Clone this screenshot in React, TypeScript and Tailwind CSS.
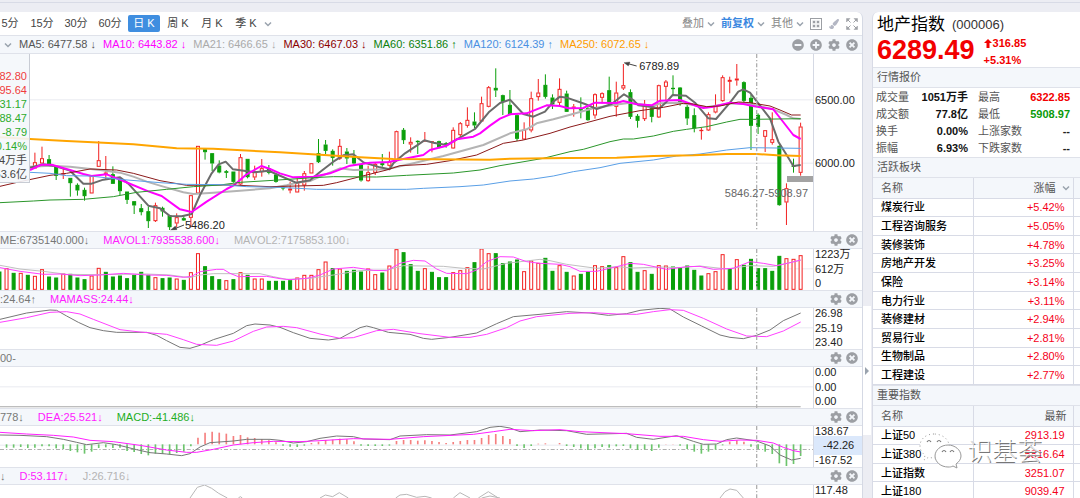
import React, { useState } from "react";
import {
  FaCog,
  FaMinusCircle,
  FaPaintBrush,
  FaPlusCircle,
  FaTimesCircle,
} from "react-icons/fa";

type Candle = [dir: number, high: number, low: number, open: number, close: number];

// chart space: three units per pixel
const CHART_W = 2439;
const FIRST_X = 104.7;
const STEP = 21.27;

const xAt = (i: number) => FIRST_X + STEP * i;

const candles: Candle[] = [
  [1, 458, 505, 487, 505], [1, 440, 490, 475, 490], [0, 465, 492, 478, 492],
  [0, 500, 540, 500, 527], [1, 505, 537, 520, 523], [0, 534, 590, 534, 549],
  [0, 550, 587, 555, 571], [0, 563, 602, 570, 588], [1, 527, 580, 527, 580],
  [1, 423, 500, 481, 500], [1, 468, 537, 518, 521], [0, 499, 551, 523, 551],
  [0, 535, 585, 535, 573], [0, 575, 612, 575, 599], [0, 604, 642, 604, 616],
  [0, 612, 646, 625, 636], [0, 620, 684, 634, 663], [1, 608, 666, 616, 663],
  [0, 620, 650, 624, 634], [0, 646, 690, 646, 681], [1, 640, 682, 652, 670],
  [0, 645, 663, 655, 661], [1, 586, 682, 586, 653], [1, 438, 580, 438, 580],
  [0, 448, 479, 448, 456], [0, 460, 513, 460, 490], [0, 481, 520, 497, 517],
  [0, 510, 534, 514, 518], [0, 515, 548, 515, 545], [1, 462, 558, 472, 553],
  [0, 477, 535, 477, 531], [1, 497, 540, 515, 532], [1, 477, 530, 505, 516],
  [0, 495, 523, 505, 518], [0, 520, 548, 524, 545], [0, 556, 571, 562, 563],
  [1, 545, 580, 566, 571], [1, 535, 577, 548, 577], [1, 513, 572, 520, 556],
  [1, 490, 520, 490, 520], [0, 417, 489, 460, 486], [0, 420, 462, 434, 452],
  [0, 448, 497, 453, 473], [1, 417, 480, 438, 476], [0, 444, 492, 455, 475],
  [0, 450, 495, 472, 490], [0, 494, 545, 494, 541], [1, 497, 545, 517, 543],
  [1, 488, 525, 492, 518], [0, 462, 500, 490, 495], [1, 455, 500, 485, 497],
  [1, 392, 485, 394, 483], [0, 384, 432, 390, 420], [1, 412, 458, 426, 433],
  [0, 421, 462, 423, 424], [1, 396, 426, 421, 424], [1, 424, 457, 424, 425],
  [0, 422, 445, 424, 443], [0, 426, 443, 430, 434], [1, 382, 446, 390, 445],
  [1, 366, 413, 370, 405], [1, 322, 383, 360, 377], [0, 337, 385, 365, 376],
  [1, 290, 366, 310, 364], [1, 258, 322, 262, 320], [0, 205, 291, 264, 271],
  [0, 284, 345, 286, 305], [0, 270, 346, 315, 344], [0, 340, 423, 346, 416],
  [1, 367, 420, 390, 418], [1, 275, 397, 295, 391], [1, 237, 302, 278, 291],
  [0, 223, 296, 255, 290], [0, 283, 327, 293, 313], [1, 235, 320, 267, 308],
  [0, 272, 336, 281, 335], [1, 312, 350, 320, 323], [0, 292, 355, 328, 330],
  [0, 320, 362, 325, 360], [1, 280, 356, 283, 346], [1, 277, 310, 280, 293],
  [0, 230, 312, 271, 310], [1, 245, 350, 278, 320], [1, 192, 270, 256, 265],
  [0, 268, 357, 277, 350], [0, 342, 383, 348, 362], [1, 300, 363, 315, 357],
  [0, 322, 367, 325, 350], [1, 254, 354, 256, 352], [1, 240, 300, 245, 260],
  [0, 226, 288, 264, 266], [0, 261, 317, 263, 311], [0, 310, 375, 321, 355],
  [0, 325, 397, 346, 385], [1, 383, 419, 390, 392], [1, 337, 393, 343, 391],
  [1, 283, 340, 318, 337], [1, 226, 305, 232, 303], [1, 230, 280, 240, 245],
  [1, 192, 257, 236, 241], [0, 244, 307, 247, 302], [0, 285, 450, 294, 377],
  [0, 340, 402, 345, 380], [1, 391, 456, 391, 410], [1, 337, 434, 418, 428],
  [0, 436, 617, 438, 615], [1, 550, 675, 565, 607], [0, 476, 518, 497, 500],
  [1, 368, 527, 380, 518],
];

// first entry sits five steps left of the first candle
const volumeTops = [
  140, 130, 144, 144, 150, 153, 133, 155, 158, 146, 147, 158, 163, 152, 129,
  141, 155, 152, 160, 150, 141, 150, 157, 160, 158, 161, 165, 142, 85, 124,
  154, 163, 166, 163, 142, 150, 161, 161, 168, 168, 168, 166, 158, 150, 150,
  133, 110, 130, 131, 138, 135, 140, 131, 148, 143, 122, 73, 82, 118, 138,
  130, 141, 157, 157, 142, 136, 127, 112, 71, 85, 85, 115, 110, 104, 139, 107,
  114, 99, 138, 121, 141, 152, 147, 140, 121, 124, 121, 127, 94, 112, 141,
  136, 147, 121, 122, 125, 128, 122, 135, 152, 145, 139, 88, 130, 103, 120,
  102, 130, 130, 138, 93, 100, 102, 91,
];

const redVolumes = new Set([
  -4, -2, 0, 1, 4, 8, 9, 17, 20, 22, 23, 27, 29, 31, 32, 37, 38, 39, 40, 41,
  43, 47, 48, 50, 51, 55, 59, 60, 61, 63, 64, 69, 70, 71, 74, 76, 79, 80, 82,
  83, 86, 88, 89, 95, 96, 97, 99, 106, 107, 108,
]);

// first entry sits four steps left of the first candle
const macdBars = [
  308, 308, 306, 309, 308, 304, 304, 310, 312, 318, 322, 326, 320, 309, 307,
  309, 308, 318, 321, 327, 331, 326, 327, 328, 324, 320, 304, 278, 263, 260,
  263, 266, 273, 270, 277, 279, 282, 286, 292, 302, 305, 306, 302, 294, 290,
  285, 284, 281, 283, 289, 302, 303, 303, 303, 302, 288, 285, 285, 287, 286,
  288, 291, 294, 291, 288, 285, 285, 279, 270, 267, 273, 282, 303, 309, 303,
  296, 295, 298, 294, 303, 306, 310, 315, 310, 306, 308, 304, 303, 310, 315,
  313, 318, 308, 297, 297, 302, 312, 320, 326, 320, 314, 301, 290, 286, 290,
  305, 312, 320, 327, 355, 363, 357, 333,
];

const mainLines = [
  {
    color: "#b4b4b4",
    width: 2,
    points:
      "90,500 150,497 210,500 300,510 360,518 400,530 440,545 490,560 550,577 580,582 640,578 720,572 810,565 860,556 890,548 930,543 960,530 1020,505 1060,510 1160,508 1240,490 1330,468 1450,435 1530,400 1580,388 1610,370 1660,358 1705,346 1780,325 1840,315 1890,308 1960,318 1980,310 2040,308 2120,322 2190,310 2250,312 2320,328 2360,345 2380,355 2402,357",
  },
  {
    color: "#6b6b6b",
    width: 2,
    points:
      "90,503 130,493 160,497 210,512 250,551 275,551 310,539 360,532 385,551 445,617 480,625 510,648 545,649 575,642 600,585 635,520 656,493 677,485 699,508 721,511 764,517 806,512 828,522 888,548 930,541 960,516 1000,485 1030,466 1060,463 1090,487 1140,502 1168,508 1180,490 1215,460 1250,437 1273,421 1300,428 1340,435 1380,413 1425,387 1468,335 1500,309 1530,299 1570,342 1600,350 1635,335 1660,305 1680,290 1700,293 1755,312 1790,327 1835,312 1872,283 1900,300 1915,316 1960,322 1977,326 2000,305 2018,285 2058,287 2085,308 2125,355 2148,357 2190,308 2215,275 2230,268 2250,278 2275,310 2310,355 2335,425 2360,465 2380,498 2402,495",
  },
  {
    color: "#ff00ff",
    width: 2,
    points:
      "90,510 125,494 155,494 210,510 250,522 275,528 320,523 370,543 445,574 485,588 540,628 575,636 620,605 680,567 700,557 740,523 784,498 810,507 840,520 880,532 940,530 990,520 1050,497 1110,488 1165,486 1225,474 1270,465 1290,450 1340,437 1370,418 1420,410 1440,400 1470,377 1500,356 1530,343 1580,340 1640,316 1680,318 1705,325 1750,324 1785,308 1850,309 1870,303 1910,313 1955,316 1980,302 2040,300 2090,318 2110,324 2140,320 2190,308 2230,312 2270,320 2320,328 2345,360 2380,405 2402,417",
  },
  {
    color: "#8b1a1a",
    width: 1,
    points:
      "0,559 60,545 150,526 200,520 270,507 350,510 400,520 480,542 560,556 690,555 810,560 890,558 970,556 1010,548 1080,530 1160,510 1200,497 1280,493 1350,482 1430,465 1510,430 1570,420 1650,400 1710,381 1760,368 1830,349 1920,332 1990,322 2050,310 2080,312 2120,320 2160,318 2215,306 2250,308 2310,318 2340,330 2375,345 2402,345",
  },
  {
    color: "#2b962b",
    width: 1,
    points:
      "0,608 100,603 150,600 250,598 340,590 410,577 500,568 580,560 660,555 720,547 820,541 940,533 1000,530 1130,531 1220,526 1360,519 1440,510 1500,497 1560,487 1630,475 1710,455 1750,448 1830,425 1870,417 1900,417 1960,408 2020,394 2060,388 2120,380 2180,366 2220,358 2260,358 2402,356",
  },
  {
    color: "#5a9fe6",
    width: 1,
    points:
      "90,517 150,520 200,527 270,528 370,539 480,548 560,553 660,554 740,560 840,562 950,568 1220,568 1270,565 1380,560 1450,555 1530,543 1600,537 1660,528 1720,515 1800,503 1860,490 1960,480 2030,468 2100,462 2180,450 2250,443 2402,445",
  },
  {
    color: "#ffa500",
    width: 2,
    points:
      "0,412 90,417 200,423 310,428 400,433 530,445 640,446 840,457 960,464 1080,472 1180,477 1300,478 1470,479 1530,476 1700,474 1850,473 1960,468 2080,466 2180,462 2270,462 2330,466 2402,468",
  },
];

const volumeLines = [
  {
    color: "#c0c0c0",
    width: 1,
    points:
      "0,121 60,132 130,139 200,148 290,149 440,147 510,150 570,158 600,150 640,146 780,146 820,155 860,163 930,160 1000,150 1080,137 1160,135 1210,122 1330,124 1390,130 1450,132 1520,115 1620,103 1650,107 1700,118 1790,130 1850,125 1900,129 1980,126 2040,128 2100,123 2180,132 2250,122 2320,124 2402,106",
  },
  {
    color: "#ff40ff",
    width: 1,
    points:
      "0,128 60,139 130,148 180,147 240,152 300,150 370,145 440,150 500,151 550,157 575,154 600,140 650,133 670,133 690,145 715,155 800,154 840,161 870,164 920,160 960,150 1000,132 1060,127 1120,136 1160,137 1200,115 1240,106 1275,108 1310,132 1340,145 1400,146 1430,135 1460,110 1500,95 1540,96 1580,110 1620,115 1680,118 1710,125 1740,139 1790,139 1850,125 1890,115 1930,118 2000,133 2060,125 2100,124 2140,133 2200,130 2250,110 2290,115 2330,122 2370,113 2402,105",
  },
];

const massLines = [
  {
    color: "#777777",
    width: 1,
    points:
      "0,283 80,264 150,255 170,256 200,273 235,292 270,308 310,317 350,322 440,322 470,331 500,347 540,367 570,370 600,361 640,344 700,325 740,302 765,297 810,300 840,307 880,323 930,340 985,345 1020,340 1080,308 1100,303 1120,308 1165,322 1230,328 1270,340 1295,343 1350,337 1430,324 1490,296 1540,275 1620,268 1700,260 1770,264 1825,271 1880,266 1920,256 1980,250 2010,252 2050,276 2105,303 2160,330 2190,337 2230,341 2270,331 2310,315 2350,287 2402,264",
  },
  {
    color: "#ff40ff",
    width: 1,
    points:
      "0,292 80,278 150,262 200,260 240,267 280,283 360,314 420,321 500,328 550,344 590,358 650,361 700,348 760,319 800,306 850,304 890,308 960,327 1020,340 1060,338 1130,317 1180,313 1260,326 1350,337 1410,337 1460,328 1520,308 1560,288 1610,275 1710,265 1780,263 1850,267 1910,268 1960,260 2010,254 2050,256 2110,280 2180,312 2240,333 2300,335 2350,318 2402,291",
  },
];

const macdLines = [
  {
    color: "#777777",
    width: 1,
    points:
      "0,270 60,271 140,275 190,283 230,292 260,299 310,293 350,299 410,314 450,323 500,327 545,332 570,326 600,306 630,293 700,288 740,283 810,283 840,286 880,294 920,290 960,280 1010,273 1060,275 1090,282 1170,284 1200,273 1280,269 1350,270 1430,260 1470,247 1500,244 1530,249 1560,260 1620,255 1700,257 1760,268 1880,265 1910,277 1960,283 2030,272 2080,289 2110,298 2150,297 2180,284 2210,279 2270,288 2310,303 2340,330 2375,345 2402,340",
  },
  {
    color: "#ff20ff",
    width: 1,
    points:
      "0,262 80,267 160,271 220,276 270,286 340,290 420,301 500,315 560,322 590,322 640,313 700,300 760,293 820,289 900,290 960,287 1060,281 1170,283 1270,275 1420,268 1480,260 1530,253 1600,257 1680,254 1740,260 1880,266 1980,274 2050,274 2110,284 2160,289 2220,285 2270,286 2320,294 2350,307 2380,317 2402,321",
  },
];

const kdjLines = [
  "570,459 592,427 614,420 635,430 656,445 682,459",
  "715,459 721,455 727,459",
  "960,459 976,450 998,455 1018,443 1045,459",
  "1187,459 1200,450 1220,448 1250,457 1275,454 1295,459",
  "1360,459 1380,443 1410,459",
  "1435,459 1465,440 1495,459",
  "1445,459 1470,453 1500,459",
  "2160,459 2175,440 2190,432 2210,436 2230,459",
].map((points) => ({ color: "#b8b8b8", width: 1, points }));

const averages = [
  { text: "MA5: 6477.58 ↓", cls: "text-[#555555]" },
  { text: "MA10: 6443.82 ↓", cls: "text-[#ff00ff]" },
  { text: "MA21: 6466.65 ↓", cls: "text-[#aaaaaa]" },
  { text: "MA30: 6467.03 ↓", cls: "text-[#8b0000]" },
  { text: "MA60: 6351.86 ↑", cls: "text-[#0c800c]" },
  { text: "MA120: 6124.39 ↑", cls: "text-[#4a90e2]" },
  { text: "MA250: 6072.65 ↓", cls: "text-[#ff9c00]" },
];

const hoverRows = [
  { text: "382.80", cls: "text-[#f03c3c]" },
  { text: "395.64", cls: "text-[#f03c3c]" },
  { text: "231.17", cls: "text-[#2cab2c]" },
  { text: "288.47", cls: "text-[#2cab2c]" },
  { text: "-8.79", cls: "text-[#2cab2c]" },
  { text: "0.14%", cls: "text-[#2cab2c]" },
  { text: "4万手", cls: "text-[#444444]" },
  { text: "53.6亿", cls: "text-[#444444]" },
];

const periods = ["5分", "15分", "30分", "60分", "日 K", "周 K", "月 K", "季 K"];

const quote = [
  ["成交量", "1051万手", "最高", "6322.85", "text-[#f20000]"],
  ["成交额", "77.8亿", "最低", "5908.97", "text-[#0a9a0a]"],
  ["换手", "0.00%", "上涨家数", "--", ""],
  ["振幅", "6.93%", "下跌家数", "--", ""],
];

const sectors = [
  ["煤炭行业", "+5.42%"],
  ["工程咨询服务", "+5.05%"],
  ["装修装饰", "+4.78%"],
  ["房地产开发", "+3.25%"],
  ["保险", "+3.14%"],
  ["电力行业", "+3.11%"],
  ["装修建材", "+2.94%"],
  ["贸易行业", "+2.81%"],
  ["生物制品", "+2.80%"],
  ["工程建设", "+2.77%"],
];

const indices = [
  ["上证50", "2913.19"],
  ["上证380", "5816.64"],
  ["上证指数", "3251.07"],
  ["上证180", "9039.47"],
];

type Line = { color: string; width: number; points: string };

const Lines: React.FC<{ lines: Line[] }> = ({ lines }) => (
  <>
    {lines.map((l) => (
      <polyline
        key={l.points}
        points={l.points}
        fill="none"
        stroke={l.color}
        strokeWidth={l.width}
        strokeLinejoin="round"
        vectorEffect="non-scaling-stroke"
      />
    ))}
  </>
);

const Plot: React.FC<{
  top: number;
  height: number;
  label: string;
  children?: React.ReactNode;
}> = ({ top, height, label, children }) => (
  <svg
    className="block h-full w-full"
    viewBox={`0 ${top} ${CHART_W} ${height}`}
    preserveAspectRatio="none"
    role="img"
    aria-label={label}
  >
    {children}
    <line
      x1={2270}
      x2={2270}
      y1={top}
      y2={top + height}
      stroke="#b0b0b0"
      strokeWidth={4}
      strokeDasharray="12 6 4 6"
    />
  </svg>
);

const GridLine: React.FC<{ y: number }> = ({ y }) => (
  <rect x={0} y={y} width={CHART_W} height={3} fill="#e9ebf1" />
);

const Chevron: React.FC = () => (
  <svg className="h-1.5 w-2 shrink-0" viewBox="0 0 8 6" aria-hidden="true">
    <path d="M1 1.5 4 4.5 7 1.5" fill="none" stroke="#9aa3ae" strokeWidth="1.5" />
  </svg>
);

const IconButton: React.FC<{ label: string; children: React.ReactNode }> = ({
  label,
  children,
}) => (
  <button
    type="button"
    aria-label={label}
    className="flex size-3 items-center justify-center text-xs text-[#9c9fa4]"
  >
    {children}
  </button>
);

const SubPanel: React.FC<{
  legend: { text: string; cls: string }[];
  axis: React.ReactNode;
  children: React.ReactNode;
}> = ({ legend, axis, children }) => (
  <section className="shrink-0">
    <div className="flex h-[18px] items-center justify-between border-y border-[#dfe2ea] bg-[#f4f7fb]">
      <div className="flex gap-[14px]">
        {legend.map((item) => (
          <span key={item.text} className={item.cls}>
            {item.text}
          </span>
        ))}
      </div>
      <div className="flex gap-1 pr-1">
        <IconButton label="设置">
          <FaCog />
        </IconButton>
        <IconButton label="关闭">
          <FaTimesCircle />
        </IconButton>
      </div>
    </div>
    <div className="flex h-[41px]">
      <div className="min-w-0 flex-1 border-r border-[#d5d9e4]">{children}</div>
      <div className="flex w-12 flex-col justify-between pb-0.5 leading-[10px]">
        {axis}
      </div>
    </div>
  </section>
);

const Axis: React.FC<{ values: string[] }> = ({ values }) => (
  <>
    {values.map((v, i) => (
      <span key={i} className="pl-px">
        {v}
      </span>
    ))}
  </>
);

const SectionTitle: React.FC<{ children: React.ReactNode }> = ({ children }) => (
  <h2 className="flex h-[21px] items-center border-y border-[#dfe2ea] bg-[#f4f7fb] pl-1 text-[#555555]">
    {children}
  </h2>
);

const ListTable: React.FC<{
  heading: React.ReactNode;
  rows: string[][];
  height: string;
}> = ({ heading, rows, height }) => (
  <table className={`w-full table-fixed border-collapse text-[11px] leading-3 ${height}`}>
    <thead>
      <tr className="h-5 border-b border-[#d8dbe6] bg-[#f4f7fb] text-[#555555]">
        <th className="w-[100px] border-r border-[#d8dbe6] pl-2 text-left font-normal">
          名称
        </th>
        <th className="border-r border-[#d8dbe6] font-normal">{heading}</th>
        <th className="w-[7px]" />
      </tr>
    </thead>
    <tbody>
      {rows.map(([name, value]) => (
        <tr key={name} className="border-b border-[#d8dbe6]">
          <td className="border-r border-[#d8dbe6] pl-2 font-medium text-black">
            {name}
          </td>
          <td className="border-r border-[#d8dbe6] pr-2 text-right text-[#f5001a]">
            {value}
          </td>
          <td />
        </tr>
      ))}
    </tbody>
  </table>
);

const PriceChart: React.FC = () => (
  <div className="relative flex h-[177px] shrink-0">
    <div className="relative min-w-0 flex-1 border-r border-[#d5d9e4]">
      <Plot top={162} height={531} label="K线图">
        <GridLine y={298} />
        <GridLine y={488} />
        {candles.map(([up, high, low, open, close], i) => {
          const x = xAt(i);
          const color = up ? "#f22020" : "#0a9f0a";
          return (
            <g key={i} stroke={color}>
              <path d={`M${x} ${high}V${open}M${x} ${close}V${low}`} strokeWidth={3} />
              <rect
                x={x - 4.5}
                y={open + 1}
                width={9}
                height={Math.max(close - open - 2, 1)}
                fill={up ? "#ffffff" : color}
                strokeWidth={3}
              />
            </g>
          );
        })}
        <Lines lines={mainLines} />
        <rect x={2361} y={528} width={78} height={18} fill="#a3a3a3" />
        <g stroke="#444444" strokeWidth={3} fill="#444444">
          <path d="M1910 198 1880 190" />
          <path d="m1872 188 18-2-5 12z" strokeWidth={1} />
          <path d="M552 675 522 687" />
          <path d="m512 690 14-12 5 11z" strokeWidth={1} />
        </g>
      </Plot>
      <span className="absolute top-[5px] right-[134px] leading-[14px] text-[#222222]">
        6789.89
      </span>
      <span className="absolute bottom-0 left-[185px] leading-3 text-[#222222]">
        5486.20
      </span>
      <span className="absolute top-[132px] right-[5px] leading-[14px] text-[#666666]">
        5846.27-5908.97
      </span>
      <div className="absolute top-0 left-0 flex h-[129px] w-[30px] flex-col items-end overflow-hidden border-r border-b border-[#c8ccd4] bg-[#f4f7fb]/90 pt-[15px] pr-0.5 leading-[14px] whitespace-nowrap">
        {hoverRows.map((row) => (
          <span key={row.text} className={row.cls}>
            {row.text}
          </span>
        ))}
      </div>
    </div>
    <div className="flex w-12 flex-col gap-[49px] pt-[39px] pl-px leading-[14px]">
      <span>6500.00</span>
      <span>6000.00</span>
    </div>
  </div>
);

const ChartArea: React.FC = () => {
  const [period, setPeriod] = useState("日 K");

  return (
    <main className="flex min-w-0 flex-1 flex-col overflow-hidden rounded-tr-md border-r border-[#d5d9e4] bg-white">
      <div className="flex h-6 shrink-0 items-center justify-between border-b border-[#dfe2ea]">
        <nav className="flex items-center gap-0.5">
          {periods.map((p) => (
            <button
              key={p}
              type="button"
              onClick={() => setPeriod(p)}
              className={`h-[17px] rounded-xs text-center whitespace-nowrap first:w-6 first:pr-1 not-first:w-8 ${
                p === period ? "bg-[#3f8ee0] text-white" : "text-[#444444]"
              }`}
            >
              {p}
            </button>
          ))}
          <Chevron />
        </nav>
        <div className="flex items-center gap-1.5 pr-1 text-[#888888]">
          <button type="button" className="flex items-center gap-[3px]">
            叠加 <Chevron />
          </button>
          <button
            type="button"
            className="flex items-center gap-[3px] font-bold text-[#3a87e0]"
          >
            前复权 <Chevron />
          </button>
          <button type="button" className="flex items-center gap-[3px]">
            其他 <Chevron />
          </button>
          <IconButton label="布局">
            <svg className="size-3" viewBox="0 0 12 12" fill="none" stroke="currentColor">
              <rect x="0.5" y="0.5" width="11" height="11" />
              <path
                d="M2.5 2.500h3v3h-3zM6.500 2.500h3v3h-3zM2.500 6.500h3v3h-3zM6.500 6.500h3v3h-3z"
                fill="currentColor"
                stroke="#ffffff"
                strokeWidth=".5"
              />
            </svg>
          </IconButton>
          <IconButton label="画笔">
            <FaPaintBrush className="size-2.5 text-[#b4b7c4]" />
          </IconButton>
          <IconButton label="全屏">
            <svg className="size-3" viewBox="0 0 12 12" fill="currentColor" stroke="currentColor">
              <path
                d="M.5.5h3.500l-3.500 3.500zM11.500.5v3.500l-3.500-3.500zM.5 11.500v-3.500l3.500 3.500zM11.500 11.500h-3.500l3.500-3.500z"
                strokeWidth=".5"
              />
              <path d="m2 2 2.500 2.500M10 2 7.500 4.500M2 10l2.500-2.500M10 10 7.500 7.500" />
            </svg>
          </IconButton>
        </div>
      </div>
      <div className="flex h-[18px] shrink-0 items-center justify-between border-b border-[#dfe2ea] bg-[#f4f7fb]">
        <div className="flex items-center gap-[7px] pl-1">
          <Chevron />
          {averages.map((a) => (
            <span key={a.text} className={`whitespace-nowrap ${a.cls}`}>
              {a.text}
            </span>
          ))}
        </div>
        <div className="flex gap-1.5 pr-1">
          <IconButton label="缩小">
            <FaMinusCircle />
          </IconButton>
          <IconButton label="放大">
            <FaPlusCircle />
          </IconButton>
          <IconButton label="设置">
            <FaCog />
          </IconButton>
          <IconButton label="关闭">
            <FaTimesCircle />
          </IconButton>
        </div>
      </div>

      <PriceChart />

      <SubPanel
        legend={[
          { text: "ME:6735140.000↓", cls: "text-[#777777]" },
          { text: "MAVOL1:7935538.600↓", cls: "text-[#ff20ff]" },
          { text: "MAVOL2:7175853.100↓", cls: "text-[#b4b4b4]" },
        ]}
        axis={<Axis values={["1223万", "612万", "0"]} />}
      >
        <Plot top={72} height={123} label="成交量">
          <GridLine y={130} />
          {volumeTops.map((y, n) => {
            const i = n - 5;
            const up = redVolumes.has(i);
            return (
              <rect
                key={i}
                x={xAt(i) - 4.5}
                y={y + 1}
                width={9}
                height={192 - y}
                fill={up ? "#ffffff" : "#0a9f0a"}
                stroke={up ? "#f22020" : "#0a9f0a"}
                strokeWidth={3}
              />
            );
          })}
          <Lines lines={volumeLines} />
        </Plot>
      </SubPanel>

      <SubPanel
        legend={[
          { text: ":24.64↑", cls: "text-[#777777]" },
          { text: "MAMASS:24.44↓", cls: "text-[#ff20ff]" },
        ]}
        axis={<Axis values={["26.98", "25.19", "23.40"]} />}
      >
        <Plot top={249} height={123} label="MASS">
          <GridLine y={307} />
          <Lines lines={massLines} />
        </Plot>
      </SubPanel>

      <SubPanel
        legend={[{ text: "00-", cls: "text-[#777777]" }]}
        axis={<Axis values={["0.00", "0.00", "0.00"]} />}
      >
        <Plot top={66} height={123} label="0.00">
          <GridLine y={124} />
          <rect x={0} y={183} width={2402} height={4} fill="#bdbdbd" />
        </Plot>
      </SubPanel>

      <SubPanel
        legend={[
          { text: "778↓", cls: "text-[#777777]" },
          { text: "DEA:25.521↓", cls: "text-[#ff20ff]" },
          { text: "MACD:-41.486↓", cls: "text-[#1fae1f]" },
        ]}
        axis={
          <>
            <span className="pl-px">138.67</span>
            <span className="flex-1 bg-[#dbe8fb] pl-[9px] leading-[19px]">-42.26</span>
            <span className="pl-px">-167.52</span>
          </>
        }
      >
        <Plot top={243} height={123} label="MACD">
          <GridLine y={299} />
          <line
            x1={0}
            x2={CHART_W}
            y1={313.5}
            y2={313.5}
            stroke="#b0b0b0"
            strokeWidth={3}
            strokeDasharray="12 6 4 6"
          />
          {macdBars.map((y, n) => (
            <line
              key={n}
              x1={xAt(n - 4)}
              x2={xAt(n - 4)}
              y1={298}
              y2={y}
              stroke={y < 298 ? "#f58080" : "#6cc46c"}
              strokeWidth={5}
            />
          ))}
          <Lines lines={macdLines} />
        </Plot>
      </SubPanel>

      <SubPanel
        legend={[
          { text: "↓", cls: "text-[#777777]" },
          { text: "D:53.117↓", cls: "text-[#ff20ff]" },
          { text: "J:26.716↓", cls: "text-[#b4b4b4]" },
        ]}
        axis={<Axis values={["117.48"]} />}
      >
        <Plot top={420} height={123} label="KDJ">
          <Lines lines={kdjLines} />
        </Plot>
      </SubPanel>
    </main>
  );
};

const Watermark: React.FC = () => (
  <div className="pointer-events-none absolute top-[421px] left-[46px] flex items-center gap-1">
    <svg className="h-9 w-11" viewBox="0 0 44 36" aria-hidden="true">
      <g fill="#ffffff" stroke="#999999" strokeWidth="1">
        <path
          d="M15 1C7 1 1 6 1 13c0 4 2 7 5 9l-1 5 5-3c2 1 4 1 6 1 8 0 14-5 14-12S23 1 15 1z"
          strokeDasharray="1 3"
        />
        <path d="M29 12c-7 0-13 5-13 11s6 11 13 11c2 0 3 0 5-1l4 2-1-4c3-2 5-5 5-8 0-6-6-11-13-11z" />
      </g>
      <path
        d="M8 9q2-3 4 0M18 9q2-3 4 0M23 19q2-3 4 0M31 19q2-3 4 0"
        fill="none"
        stroke="#777777"
        strokeWidth="1.2"
      />
    </svg>
    <span className="text-[25px] leading-8 font-light text-white/80 [text-shadow:1px_1px_0_#777777]">
      识基荟
    </span>
  </div>
);

const QuotePanel: React.FC = () => (
  <aside className="relative w-[208px] shrink-0 overflow-hidden rounded-tl-md border-l border-[#d8dbe6] bg-white">
    <header className="h-[55px] pl-1">
      <h1 className="flex items-center gap-[7px] text-[17px] leading-[26px] text-black">
        地产指数 <span className="text-[13px] text-[#333333]">(000006)</span>
      </h1>
      <div className="flex gap-[9px] font-bold text-[#f20000]">
        <strong className="text-[27px] leading-[25px]">6289.49</strong>
        <div className="-mt-[3px] flex flex-col leading-[17px]">
          <span className="flex items-center gap-px">
            <svg className="h-[9px] w-2" viewBox="0 0 8 9" fill="currentColor" aria-hidden="true">
              <path d="M4 0 8 4H5.5V9H2.5V4H0z" />
            </svg>
            316.85
          </span>
          <span>+5.31%</span>
        </div>
      </div>
    </header>
    <SectionTitle>行情报价</SectionTitle>
    <dl className="grid grid-cols-[38px_54px_50px_52px] pt-px pl-[3px] leading-[17px] whitespace-nowrap">
      {quote.map(([a, av, b, bv, cls]) => (
        <React.Fragment key={a}>
          <dt className="text-[#555555]">{a}</dt>
          <dd className="text-right font-bold text-[#111111]">{av}</dd>
          <dt className="pl-[10px] text-[#555555]">{b}</dt>
          <dd className={`text-right font-bold ${cls}`}>{bv}</dd>
        </React.Fragment>
      ))}
    </dl>
    <SectionTitle>活跃板块</SectionTitle>
    <ListTable
      heading={
        <span className="flex items-center justify-end gap-1.5 pr-[3px]">
          涨幅 <Chevron />
        </span>
      }
      rows={sectors}
      height="h-[207px]"
    />
    <SectionTitle>重要指数</SectionTitle>
    <ListTable
      heading={<span className="block pr-1.5 text-right">最新</span>}
      rows={indices}
      height="h-[95px]"
    />
    <Watermark />
  </aside>
);

const App: React.FC = () => {
  return (
    <div className="flex h-screen flex-col overflow-hidden bg-[#ecedf3] font-['Liberation_Sans','Noto_Sans_CJK_SC',sans-serif] text-[11px] text-[#222222]">
      <div className="h-[3px] shrink-0 border-b border-[#d8dbe6]" />
      <div className="flex min-h-0 flex-1 pt-[9px]">
        <ChartArea />
        <div className="flex w-[9px] shrink-0 flex-col pt-[294px]">
          <button
            type="button"
            aria-label="收起"
            className="flex h-[129px] w-2 items-center justify-center bg-white"
          >
            <svg className="h-2 w-1" viewBox="0 0 4 8" aria-hidden="true">
              <path d="M0 0 4 4 0 8z" fill="#9aa3ae" />
            </svg>
          </button>
        </div>
        <QuotePanel />
      </div>
    </div>
  );
};

export default App;
